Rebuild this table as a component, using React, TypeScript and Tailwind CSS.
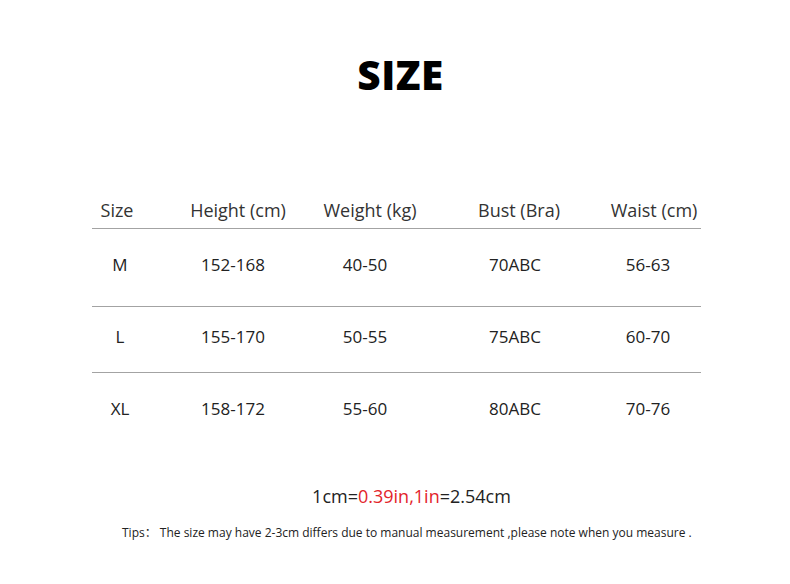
import React from "react";

const headers = ["Size", "Height (cm)", "Weight (kg)", "Bust (Bra)", "Waist (cm)"];
const rows = [
  ["M", "152-168", "40-50", "70ABC", "56-63"],
  ["L", "155-170", "50-55", "75ABC", "60-70"],
  ["XL", "158-172", "55-60", "80ABC", "70-76"],
];

function Cell({ children, w }: { children: React.ReactNode; w: string }) {
  return <div className={`${w} flex justify-center whitespace-nowrap`}>{children}</div>;
}

export default function App() {
  return (
    <div
      className="w-[790px] h-[584px] bg-white text-[#222] flex flex-col overflow-hidden"
      style={{ fontFamily: '"Open Sans", "Noto Sans CJK SC", sans-serif' }}
    >
      <div className="h-[51px]" />
      <div className="flex justify-center pl-[11px]">
        <h1 className="text-[40.5px] leading-[48px] font-extrabold text-black tracking-[0.5px]">SIZE</h1>
      </div>
      <div className="h-[91px]" />
      <div className="ml-[92px] w-[609px] flex flex-col text-[17px]">
        <div className="h-[39px] pt-[3px] flex items-center border-b border-[#a3a3a3] text-[#333] text-[18px]">
          <div className="flex items-center">
            <Cell w="w-[50px]">{headers[0]}</Cell>
            <Cell w="w-[192px]">{headers[1]}</Cell>
            <Cell w="w-[72px]">{headers[2]}</Cell>
            <Cell w="w-[226px]">{headers[3]}</Cell>
            <Cell w="w-[44px]">{headers[4]}</Cell>
          </div>
        </div>
        {rows.map((r, i) => (
          <div
            key={r[0]}
            className={
              i === 0
                ? "h-[78px] pb-[5px] flex items-center border-b border-[#a3a3a3]"
                : i === 1
                ? "h-[66px] pb-[5px] flex items-center border-b border-[#a3a3a3]"
                : "h-[70px] pt-[2px] flex items-center"
            }
          >
            <Cell w="w-[56px]">{r[0]}</Cell>
            <Cell w="w-[170px]">{r[1]}</Cell>
            <Cell w="w-[94px]">{r[2]}</Cell>
            <Cell w="w-[206px]">{r[3]}</Cell>
            <Cell w="w-[60px]">{r[4]}</Cell>
          </div>
        ))}
      </div>
      <div className="h-[41px]" />
      <div className="flex justify-center pl-[33px] text-[18px] leading-[24px] text-[#222]">
        <span>
          1cm=<span className="text-[#e3242b]">0.39in,1in</span>=2.54cm
        </span>
      </div>
      <div className="h-[16px]" />
      <div className="pl-[122px] text-[12px] leading-[18px] text-[#222] whitespace-nowrap">
        Tips： The size may have 2-3cm differs due to manual measurement ,please note when you measure .
      </div>
    </div>
  );
}
